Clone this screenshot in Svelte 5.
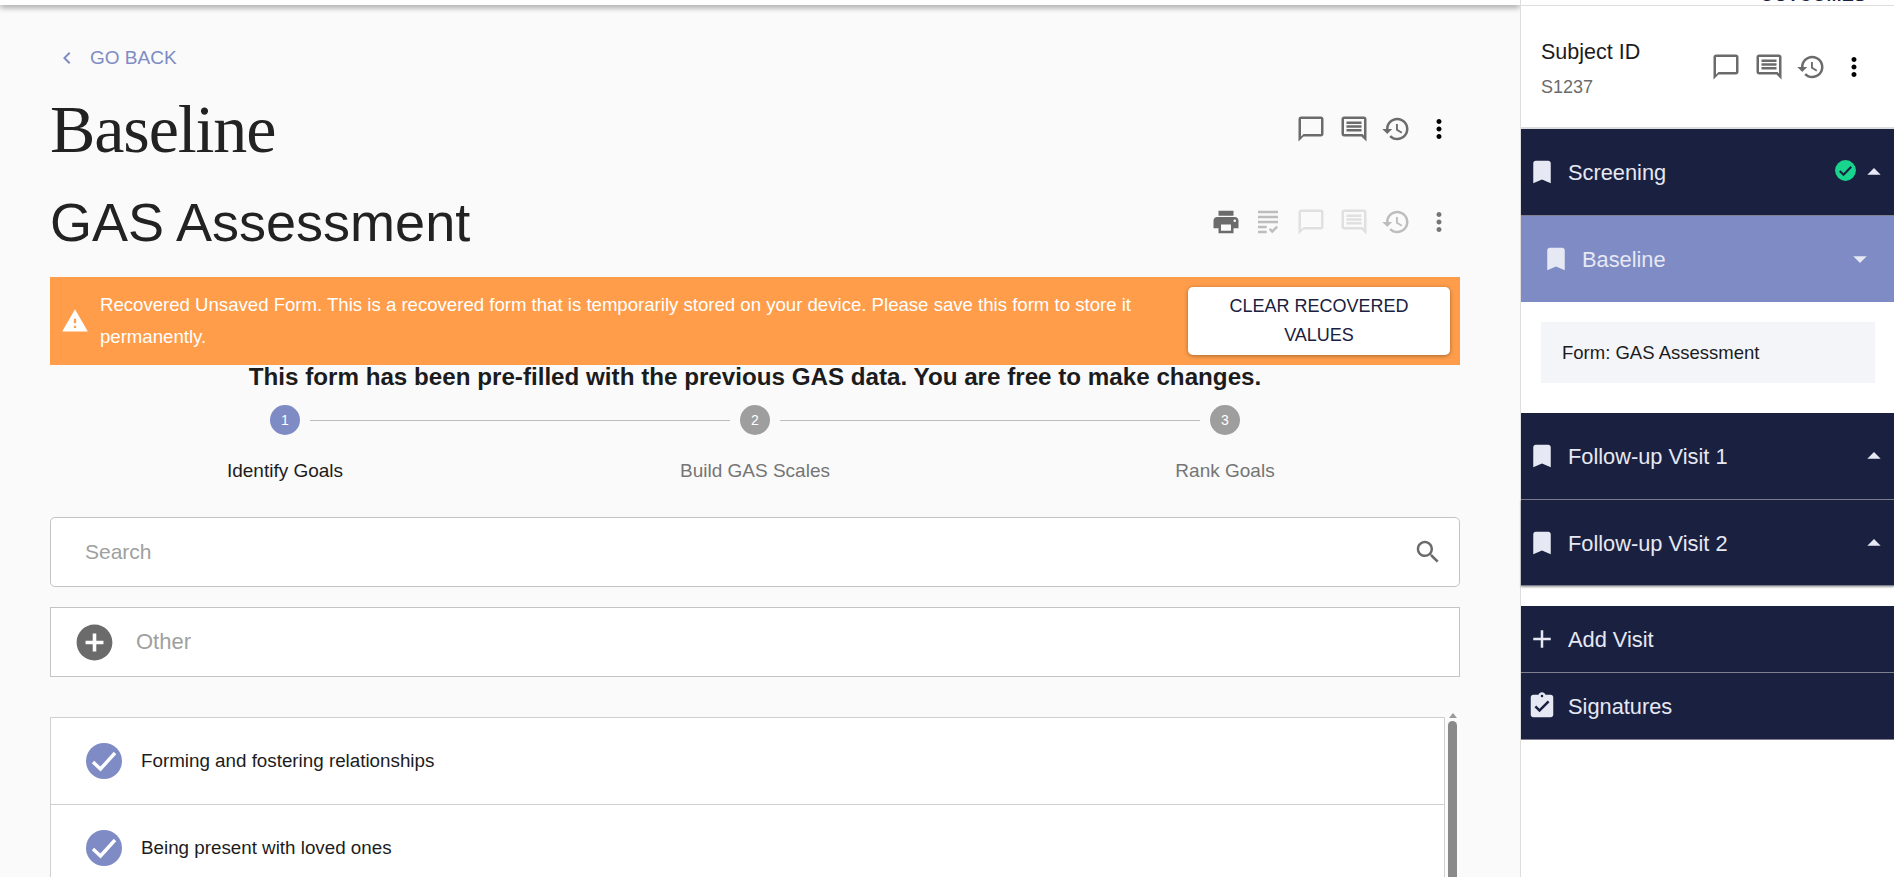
<script>
	const paths = {
		chat: 'M20 2H4c-1.1 0-2 .9-2 2v18l4-4h14c1.1 0 2-.9 2-2V4c0-1.1-.9-2-2-2zm0 14H6l-2 2V4h16v12z',
		comment: 'M20 17.17 18.83 16H4V4h16v13.17zM20 2H4c-1.1 0-2 .9-2 2v12c0 1.1.9 2 2 2h14l4 4V4c0-1.1-.9-2-2-2zM6 12h12v2H6zM6 9h12v2H6zM6 6h12v2H6z',
		history: 'M13 3c-4.97 0-9 4.03-9 9H1l3.89 3.89.07.14L9 12H6c0-3.87 3.13-7 7-7s7 3.13 7 7-3.13 7-7 7c-1.93 0-3.68-.79-4.94-2.06l-1.42 1.42C8.27 19.99 10.51 21 13 21c4.97 0 9-4.03 9-9s-4.03-9-9-9zm-1 5v5l4.28 2.54.72-1.21-3.5-2.08V8H12z',
		more: 'M12 8c1.1 0 2-.9 2-2s-.9-2-2-2-2 .9-2 2 .9 2 2 2zm0 2c-1.1 0-2 .9-2 2s.9 2 2 2 2-.9 2-2-.9-2-2-2zm0 6c-1.1 0-2 .9-2 2s.9 2 2 2 2-.9 2-2-.9-2-2-2z',
		print: 'M19 8H5c-1.66 0-3 1.34-3 3v6h4v4h12v-4h4v-6c0-1.66-1.34-3-3-3zm-3 11H8v-5h8v5zm3-7c-.55 0-1-.45-1-1s.45-1 1-1 1 .45 1 1-.45 1-1 1zm-1-9H6v4h12V3z',
		grading: 'M4 7h16v2H4V7zm0 6h16v-2H4v2zm0 4h7v-2H4v2zm0 4h7v-2H4v2zm11.41-2.83L14 16.75l-1.41 1.41L15.41 21 20 16.42 18.59 15l-3.18 3.17zM4 3v2h16V3H4z',
		bookmark: 'M17 3H7c-1.1 0-1.99.9-1.99 2L5 21l7-3 7 3V5c0-1.1-.9-2-2-2z',
		signature: 'M19 3h-4.18C14.4 1.84 13.3 1 12 1c-1.3 0-2.4.84-2.82 2H5c-1.1 0-2 .9-2 2v14c0 1.1.9 2 2 2h14c1.1 0 2-.9 2-2V5c0-1.1-.9-2-2-2zm-7 0c.55 0 1 .45 1 1s-.45 1-1 1-1-.45-1-1 .45-1 1-1zm-2 14l-4-4 1.41-1.41L10 14.17l6.59-6.59L18 9l-8 8z',
		search: 'M15.5 14h-.79l-.28-.27C15.41 12.59 16 11.11 16 9.5 16 5.91 13.09 3 9.5 3S3 5.91 3 9.5 5.91 16 9.5 16c1.61 0 3.09-.59 4.23-1.57l.27.28v.79l5 4.99L20.49 19l-4.99-5zm-6 0C7.01 14 5 11.99 5 9.5S7.01 5 9.5 5 14 7.01 14 9.5 11.99 14 9.5 14z',
		warning: 'M1 21h22L12 2 1 21zm12-3h-2v-2h2v2zm0-4h-2v-4h2v4z',
		addCircle: 'M12 2C6.48 2 2 6.48 2 12s4.48 10 10 10 10-4.48 10-10S17.52 2 12 2zm5 11h-4v4h-2v-4H7v-2h4V7h2v4h4v2z',
		back: 'M15.41 7.41L14 6l-6 6 6 6 1.41-1.41L10.83 12z',
		add: 'M19 13h-6v6h-2v-6H5v-2h6V5h2v6h6v2z',
		up: 'M7 14l5-5 5 5z',
		down: 'M7 10l5 5 5-5z'
	};

	const steps = ['Identify Goals', 'Build GAS Scales', 'Rank Goals'];
	const goals = ['Forming and fostering relationships', 'Being present with loved ones'];
</script>

{#snippet icon(name, size, cls = '')}
	<svg class="icon {cls}" width={size} height={size} viewBox="0 0 24 24" aria-hidden="true">
		<path d={paths[name]} />
	</svg>
{/snippet}

{#snippet actions()}
	<div class="actions">
		{@render icon('chat', 30, 'grey')}
		{@render icon('comment', 30, 'grey')}
		{@render icon('history', 30, 'grey')}
		{@render icon('more', 30, 'black')}
	</div>
{/snippet}

<div class="page">
	<main class="main">
		<div class="topbar"></div>
		<div class="content">
			<a class="back" href="#back">
				{@render icon('back', 24, 'lav')}
				<span>GO BACK</span>
			</a>

			<div class="title-row">
				<h1>Baseline</h1>
				{@render actions()}
			</div>

			<div class="form-row">
				<h2>GAS Assessment</h2>
				<div class="actions">
					{@render icon('print', 30, 'grey')}
					{@render icon('grading', 30, 'faint')}
					{@render icon('chat', 30, 'fainter')}
					{@render icon('comment', 30, 'fainter')}
					{@render icon('history', 30, 'soft')}
					{@render icon('more', 30, 'mid')}
				</div>
			</div>

			<div class="banner">
				{@render icon('warning', 28, 'white')}
				<p>Recovered Unsaved Form. This is a recovered form that is temporarily stored on your device. Please save this form to store it permanently.</p>
				<button class="clear">CLEAR RECOVERED VALUES</button>
			</div>

			<h3>This form has been pre-filled with the previous GAS data. You are free to make changes.</h3>

			<div class="stepper">
				{#each steps as step, i}
					<div class="step">
						<div class="track">
							<span class="seg" class:none={i === 0}></span>
							<span class="dot" class:on={i === 0}>{i + 1}</span>
							<span class="seg" class:none={i === steps.length - 1}></span>
						</div>
						<span class="label" class:on={i === 0}>{step}</span>
					</div>
				{/each}
			</div>

			<div class="search">
				<span>Search</span>
				{@render icon('search', 30, 'grey')}
			</div>

			<div class="other">
				{@render icon('addCircle', 43, 'grey')}
				<span>Other</span>
			</div>

			<div class="list-wrap">
				<ul class="list">
					{#each goals as goal}
						<li>
							<span class="tick">
								<svg width="36" height="36" viewBox="0 0 36 36" aria-hidden="true">
									<circle cx="18" cy="18" r="18" fill="#7e8bc4" />
									<path d="M7 19l7.5 7L29 10" fill="none" stroke="#fff" stroke-width="3.4" />
								</svg>
							</span>
							{goal}
						</li>
					{/each}
				</ul>
				<div class="scrollbar">
					<span class="arrow"></span>
					<span class="thumb"></span>
				</div>
			</div>
		</div>
	</main>

	<aside class="side">
		<div class="peek"><span>OUTCOMES</span></div>

		<div class="subject">
			<div class="subject-text">
				<div class="subject-title">Subject ID</div>
				<div class="subject-id">S1237</div>
			</div>
			{@render actions()}
		</div>

		<div class="visit">
			{@render icon('bookmark', 30)}
			<span class="name">Screening</span>
			<svg class="done" width="25" height="25" viewBox="0 0 24 24" aria-hidden="true">
				<circle cx="12" cy="12" r="10" fill="#19d48c" />
				<path d="M6.5 12.5l3.6 3.5 7.4-7.5" fill="none" stroke="#1a2040" stroke-width="2" />
			</svg>
			{@render icon('up', 32, 'caret')}
		</div>

		<div class="visit active">
			{@render icon('bookmark', 30)}
			<span class="name">Baseline</span>
			{@render icon('down', 32, 'caret')}
		</div>

		<div class="forms">
			<div class="form-item">Form: GAS Assessment</div>
		</div>

		<div class="visit">
			{@render icon('bookmark', 30)}
			<span class="name">Follow-up Visit 1</span>
			{@render icon('up', 32, 'caret')}
		</div>
		<div class="visit last">
			{@render icon('bookmark', 30)}
			<span class="name">Follow-up Visit 2</span>
			{@render icon('up', 32, 'caret')}
		</div>

		<div class="extra">
			<div class="extra-row">
				{@render icon('add', 30)}
				<span class="name">Add Visit</span>
			</div>
			<div class="extra-row">
				{@render icon('signature', 30)}
				<span class="name">Signatures</span>
			</div>
		</div>
	</aside>
</div>

<style>
	:global(body) {
		margin: 0;
		background: #fff;
		overflow: hidden;
	}

	.page {
		display: flex;
		height: 877px;
		overflow: hidden;
		font-family: 'Liberation Sans', Arial, sans-serif;
		color: #1c1c1c;
	}

	.icon {
		display: block;
		flex: none;
		fill: currentColor;
	}
	.grey { color: #6b6b6b; }
	.black { color: #000; }
	.lav { color: #7e8bc4; }
	.white { color: #fff; }
	.faint { color: #bdbdbd; }
	.fainter { color: #e0e0e0; }
	.soft { color: #bdbdbd; }
	.mid { color: #757575; }

	/* main column */
	.main {
		width: 1520px;
		flex: none;
		background: #fafafa;
		overflow: hidden;
	}

	.topbar {
		height: 5px;
		background: #fff;
		box-shadow: 0 2px 6px rgba(0, 0, 0, 0.45);
	}

	.content {
		padding: 38px 60px 0 50px;
	}

	.back {
		display: flex;
		align-items: center;
		gap: 11px;
		height: 30px;
		padding-left: 5px;
		color: #7e8bc4;
		font-size: 19px;
		text-decoration: none;
	}

	.title-row,
	.form-row {
		display: flex;
		align-items: center;
		justify-content: space-between;
		height: 74px;
	}
	.title-row { margin-top: 19px; }
	.form-row { margin-top: 19px; }

	h1 {
		margin: 0;
		font-family: 'Liberation Serif', 'Times New Roman', serif;
		font-size: 68px;
		font-weight: 400;
		letter-spacing: -1.1px;
		color: #222;
	}

	h2 {
		margin: 0;
		font-size: 54px;
		font-weight: 400;
		color: #222;
	}

	.actions {
		display: flex;
		align-items: center;
		gap: 12.7px;
		margin-right: -9px;
		padding-right: 15px;
	}

	.banner {
		display: flex;
		align-items: center;
		height: 88px;
		margin-top: 18px;
		padding: 0 10px 0 11px;
		box-sizing: border-box;
		background: #ff9d4a;
		color: #fff;
	}
	.banner p {
		flex: 1;
		margin: 0 48px 0 11px;
		font-size: 18.6px;
		line-height: 32px;
	}

	.clear {
		width: 262px;
		height: 68px;
		flex: none;
		padding: 0 20px;
		border: 0;
		border-radius: 5px;
		background: #fff;
		box-shadow: 0 1px 4px rgba(0, 0, 0, 0.35);
		color: #1a2040;
		font: 18px/29px 'Liberation Sans', Arial, sans-serif;
	}

	h3 {
		margin: 0;
		height: 24px;
		font-size: 24.2px;
		font-weight: 700;
		line-height: 24px;
		text-align: center;
		color: #1c1c1c;
	}

	.stepper {
		display: grid;
		grid-template-columns: repeat(3, 1fr);
		margin-top: 16px;
	}
	.step {
		display: flex;
		flex-direction: column;
		align-items: stretch;
		text-align: center;
	}
	.track {
		display: flex;
		align-items: center;
	}
	.seg {
		flex: 1;
		height: 1px;
		background: #bdbdbd;
	}
	.seg.none { background: transparent; }
	.dot {
		width: 30px;
		height: 30px;
		margin: 0 10px;
		border-radius: 50%;
		background: #9e9e9e;
		color: #fff;
		font-size: 14px;
		line-height: 30px;
	}
	.dot.on { background: #7e8bc4; }
	.label {
		margin-top: 25px;
		font-size: 19px;
		line-height: 22px;
		color: #757575;
	}
	.label.on { color: #1c1c1c; }

	.search,
	.other {
		display: flex;
		align-items: center;
		height: 70px;
		box-sizing: border-box;
		border: 1px solid #c4c4c4;
		background: #fff;
		font-size: 21px;
		color: #a0a0a0;
	}
	.search {
		justify-content: space-between;
		margin-top: 35px;
		padding: 0 16px 0 34px;
		border-radius: 5px;
	}
	.other {
		gap: 20px;
		margin-top: 20px;
		padding-left: 22px;
		font-size: 22px;
	}

	.list-wrap {
		display: flex;
		margin-top: 40px;
		height: 170px;
	}
	.list {
		flex: 1;
		margin: 0;
		padding: 0;
		list-style: none;
		background: #fff;
		border: 1px solid #d0d0d0;
		border-bottom: 0;
	}
	.list li {
		display: flex;
		align-items: center;
		gap: 19px;
		height: 86px;
		padding-left: 35px;
		font-size: 18.8px;
		color: #1c1c1c;
		border-bottom: 1px solid #d0d0d0;
	}
	.tick {
		display: block;
		height: 36px;
	}

	.scrollbar {
		display: flex;
		flex-direction: column;
		align-items: center;
		width: 15px;
		background: #fbfbfb;
	}
	.arrow {
		width: 0;
		height: 0;
		margin-top: -4px;
		border: 4.5px solid transparent;
		border-top: 0;
		border-bottom: 5px solid #999;
	}
	.thumb {
		flex: 1;
		width: 9px;
		margin-top: 3px;
		border-radius: 4.5px 4.5px 0 0;
		background: #8a8a8a;
	}

	/* sidebar */
	.side {
		flex: 1;
		min-width: 0;
		border-left: 1px solid #ddd;
		background: #fff;
	}

	.peek {
		height: 5px;
		overflow: hidden;
		border-bottom: 1px solid #ddd;
		padding-left: 239px;
	}
	.peek span {
		display: block;
		margin-top: -14px;
		font-size: 18px;
		line-height: 18px;
		font-weight: 700;
		letter-spacing: 0.3px;
		color: #1a2040;
	}

	.subject {
		display: flex;
		align-items: center;
		justify-content: space-between;
		height: 123px;
		box-sizing: border-box;
		padding-left: 20px;
		border-bottom: 2px solid #ddd;
	}
	.subject .actions {
		margin-right: 0;
		padding-right: 25px;
	}
	.subject-text {
		padding-top: 4px;
	}
	.subject-title {
		font-size: 21.5px;
		color: #1c1c1c;
	}
	.subject-id {
		margin-top: 12px;
		font-size: 18px;
		color: #6b6b6b;
	}

	.visit {
		display: flex;
		align-items: center;
		height: 87px;
		box-sizing: border-box;
		padding: 0 4px 0 6px;
		background: #1a2040;
		color: #e6e8f3;
		border-bottom: 1px solid #7d7f8c;
	}
	.visit.last {
		height: 86px;
		box-shadow: 0 1px 2px rgba(0, 0, 0, 0.4);
	}
	.visit.active {
		height: 86px;
		padding: 0 18px 0 20px;
		background: #7e8bc4;
		border-bottom: 0;
	}
	.name {
		margin-left: 11px;
		padding-top: 2px;
		font-size: 21.8px;
	}
	.visit .name { flex: 1; }
	.done { margin-bottom: 4px; }
	.caret { color: #e6e8f3; }

	.forms {
		height: 111px;
		box-sizing: border-box;
		padding: 20px 19px 0 20px;
	}
	.form-item {
		height: 61px;
		padding-left: 21px;
		background: #f4f5f9;
		font-size: 18.5px;
		line-height: 61px;
		color: #1c1c1c;
	}

	.extra {
		margin-top: 20px;
		background: #1a2040;
		color: #e6e8f3;
	}
	.extra-row {
		display: flex;
		align-items: center;
		height: 67px;
		box-sizing: border-box;
		padding-left: 6px;
		border-bottom: 1px solid #7d7f8c;
	}
</style>
